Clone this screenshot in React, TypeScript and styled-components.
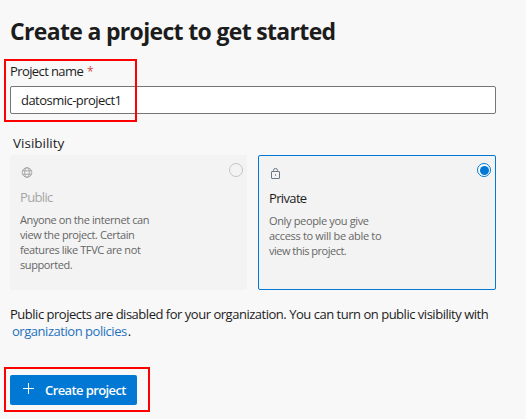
import React from 'react';
import styled, { createGlobalStyle } from 'styled-components';

const GlobalStyle = createGlobalStyle`
  * { box-sizing: border-box; }
  body {
    margin: 0;
    background: #f8f8f8;
    color: #1c1c1c;
    font-family: 'Open Sans', 'Noto Sans', sans-serif;
    font-size: 13px;
    overflow: hidden;
  }
`;

const Page = styled.main`
  width: 526px;
  height: 419px;
  padding: 15px 30px 0 10px;
  display: flex;
  flex-direction: column;
  align-items: stretch;
`;

const Line = styled.span<{ $gap?: number }>`
  display: block;
  white-space: nowrap;
  letter-spacing: ${(p) => p.$gap ?? 0}px;
`;

const Title = styled.h1`
  margin: 0;
  height: 32px;
  line-height: 32px;
  font-size: 23px;
  font-weight: 700;
  letter-spacing: -0.67px;
  white-space: nowrap;
`;

const Field = styled.div`
  position: relative;
  margin-top: 15px;
  height: 52px;
`;

const Label = styled.label`
  display: flex;
  gap: 4px;
  height: 20px;
  line-height: 19px;
  margin-bottom: 4px;
  letter-spacing: -0.6px;
  white-space: nowrap;
`;

const Required = styled.span`
  color: #cd4a45;
  font-size: 12px;
`;

const Input = styled.input`
  display: block;
  width: 486px;
  height: 28px;
  padding: 0 10px;
  border: 1px solid #767676;
  border-radius: 2px;
  background: #fff;
  color: #1c1c1c;
  font: inherit;
  letter-spacing: -0.53px;
  outline: none;
`;

const Highlight = styled.div<{ $top: number; $width: number; $height: number }>`
  position: absolute;
  left: -6px;
  top: ${(p) => p.$top}px;
  width: ${(p) => p.$width}px;
  height: ${(p) => p.$height}px;
  border: 2px solid #fe0000;
  pointer-events: none;
`;

const GroupLabel = styled.div`
  margin-top: 19px;
  height: 22px;
  line-height: 20px;
  padding-left: 3px;
  font-size: 13.5px;
  letter-spacing: 0;
`;

const Cards = styled.div`
  display: grid;
  grid-template-columns: 237px 238px;
  gap: 11px;
  height: 135px;
`;

const Card = styled.section<{ $selected?: boolean }>`
  position: relative;
  padding: 11px 10px;
  background: #f3f3f3;
  border: ${(p) => (p.$selected ? '1px solid #0078d4' : '0')};
  border-radius: 2px;
`;

const IconSlot = styled.div`
  display: flex;
  height: 14px;
  padding: 1px 0 0 1px;
`;

const CardTitle = styled.div<{ $muted?: boolean }>`
  margin-top: 7px;
  height: 20px;
  line-height: 20px;
  color: ${(p) => (p.$muted ? '#a6a6a6' : '#1c1c1c')};
  letter-spacing: -0.65px;
`;

const CardText = styled.div`
  margin-top: 5px;
  font-size: 11px;
  line-height: 15px;
  color: #666;
`;

const Radio = styled.span<{ $on?: boolean }>`
  position: absolute;
  top: ${(p) => (p.$on ? 7 : 8)}px;
  right: 4px;
  width: 14px;
  height: 14px;
  border: 1px solid ${(p) => (p.$on ? '#0078d4' : '#c4c4c4')};
  background: ${(p) => (p.$on ? '#fff' : 'transparent')};
  border-radius: 50%;
  display: grid;
  place-items: center;
  &::after {
    content: '';
    width: 9px;
    height: 9px;
    border-radius: 50%;
    background: ${(p) => (p.$on ? '#0078d4' : 'transparent')};
  }
`;

const Note = styled.div`
  margin-top: 16px;
  line-height: 17px;
  height: 34px;
`;

const Link = styled.a`
  color: #1f72bd;
  padding: 0 1px 0 2px;
  text-decoration: none;
`;

const Actions = styled.div`
  position: relative;
  margin-top: 35px;
  height: 30px;
`;

const Button = styled.button`
  display: flex;
  align-items: center;
  width: 127px;
  height: 30px;
  padding: 0 0 0 13px;
  gap: 11px;
  border: 0;
  border-radius: 2px;
  background: #0078d4;
  color: #fff;
  font: inherit;
  font-weight: 600;
  letter-spacing: -0.6px;
  white-space: nowrap;
  svg { margin-top: -3px; }
`;

const GlobeIcon = () => (
  <svg width="12" height="12" viewBox="0 0 12 12" fill="none" stroke="#a6a6a6">
    <circle cx="6" cy="5.5" r="4.8" />
    <ellipse cx="6" cy="5.5" rx="2.3" ry="4.8" />
    <path d="M1.5 3.8h9M1.5 7.2h9" />
  </svg>
);

const LockIcon = () => (
  <svg width="12" height="13" viewBox="0 0 12 13" fill="none" stroke="#6b7887">
    <rect x="1.5" y="3.5" width="8" height="7" rx="0.5" />
    <path d="M3.5 3.5V2.4a2 2 0 0 1 4 0V3.5" />
    <rect x="5" y="6.5" width="1" height="1" fill="#444" stroke="none" />
  </svg>
);

const PlusIcon = () => (
  <svg width="11" height="11" viewBox="0 0 11 11" stroke="#fff">
    <path d="M5.5 0v11M0 5.5h11" />
  </svg>
);

export default function App() {
  return (
    <>
      <GlobalStyle />
      <Page>
        <Title>Create a project to get started</Title>
        <Field>
          <Label htmlFor="name">
            Project name <Required>*</Required>
          </Label>
          <Input id="name" defaultValue="datosmic-project1" />
          <Highlight $top={-3} $width={133} $height={63} />
        </Field>
        <GroupLabel>Visibility</GroupLabel>
        <Cards>
          <Card>
            <IconSlot><GlobeIcon /></IconSlot>
            <CardTitle $muted>Public</CardTitle>
            <CardText>
              <Line $gap={-0.4}>Anyone on the internet can</Line>
              <Line $gap={-0.4}>view the project. Certain</Line>
              <Line $gap={-0.4}>features like TFVC are not</Line>
              <Line $gap={-0.4}>supported.</Line>
            </CardText>
            <Radio />
          </Card>
          <Card $selected>
            <IconSlot><LockIcon /></IconSlot>
            <CardTitle>Private</CardTitle>
            <CardText>
              <Line $gap={-0.35}>Only people you give</Line>
              <Line $gap={-0.32}>access to will be able to</Line>
              <Line $gap={-0.5}>view this project.</Line>
            </CardText>
            <Radio $on />
          </Card>
        </Cards>
        <Note>
          <Line $gap={-0.48}>Public projects are disabled for your organization. You can turn on public visibility with</Line>
          <Line $gap={-0.46}><Link>organization policies</Link>.</Line>
        </Note>
        <Actions>
          <Button><PlusIcon />Create project</Button>
          <Highlight $top={-8} $width={146} $height={45} />
        </Actions>
      </Page>
    </>
  );
}
